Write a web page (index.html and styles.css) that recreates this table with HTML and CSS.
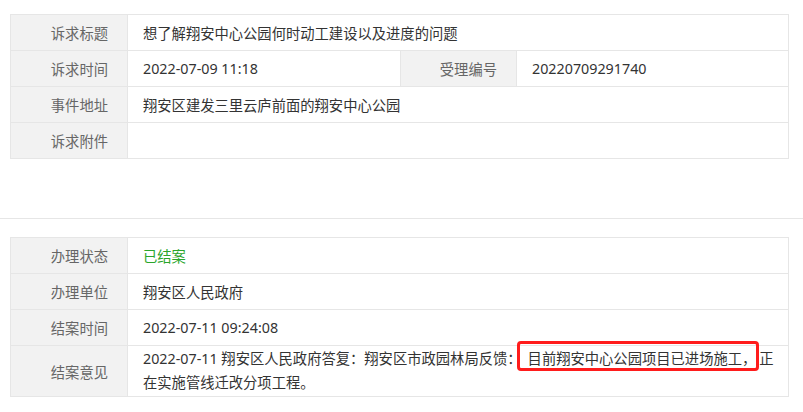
FILE: index.html
```html
<!DOCTYPE html>
<html lang="zh-CN">
<head>
<meta charset="utf-8">
<title>诉求详情</title>
<link rel="stylesheet" href="styles.css">
</head>
<body>
<section class="block block-top">
  <div class="grid">
    <div class="label">诉求标题</div>
    <div class="value span3">想了解翔安中心公园何时动工建设以及进度的问题</div>
    <div class="label">诉求时间</div>
    <div class="value">2022-07-09 11:18</div>
    <div class="label">受理编号</div>
    <div class="value">20220709291740</div>
    <div class="label">事件地址</div>
    <div class="value span3">翔安区建发三里云庐前面的翔安中心公园</div>
    <div class="label">诉求附件</div>
    <div class="value span3"></div>
  </div>
</section>
<section class="block block-bottom">
  <div class="grid">
    <div class="label">办理状态</div>
    <div class="value span3 done">已结案</div>
    <div class="label">办理单位</div>
    <div class="value span3">翔安区人民政府</div>
    <div class="label">结案时间</div>
    <div class="value span3">2022-07-11 09:24:08</div>
    <div class="label tall">结案意见</div>
    <div class="value span3 tall multi">2022-07-11 翔安区人民政府答复：翔安区市政园林局反馈：<span class="mark">目前翔安中心公园项目已进场施工，</span>正在实施管线迁改分项工程。</div>
  </div>
</section>
</body>
</html>
```
FILE: styles.css
```css
html, body {
  margin: 0;
  padding: 0;
  background: #fff;
}
body {
  font-family: "Noto Sans", "Noto Sans CJK SC", sans-serif;
  font-size: 14.3px;
  color: #333;
}
.block {
  padding-left: 10px;
  padding-right: 14px;
}
.block-top {
  padding-top: 14px;
  padding-bottom: 59px;
  border-bottom: 1px solid #e6e6e6;
}
.block-bottom {
  padding-top: 18px;
}
.grid {
  display: grid;
  grid-template-columns: 116px 272px 115px 271px;
  gap: 1px;
  padding: 1px;
  background: #e6e6e6;
  width: 777px;
}
.label, .value {
  height: 35px;
  display: flex;
  align-items: center;
  box-sizing: border-box;
}
.label {
  background: #f2f2f2;
  color: #666;
  justify-content: flex-end;
  padding-right: 19px;
}
.value {
  background: #fff;
  padding: 0 15px;
}
.span3 {
  grid-column: span 3;
}
.done {
  color: #2aa52a;
}
.tall {
  height: 50px;
}
.multi {
  display: block;
  line-height: 24px;
  padding: 1px 10px 0 15px;
}
.mark {
  position: relative;
  padding: 0 3px 0 6px;
}
.mark::after {
  content: "";
  position: absolute;
  left: -5px;
  right: 0;
  top: -8px;
  bottom: -3px;
  border: 3px solid #ff1c1c;
  border-radius: 4px;
}
```
